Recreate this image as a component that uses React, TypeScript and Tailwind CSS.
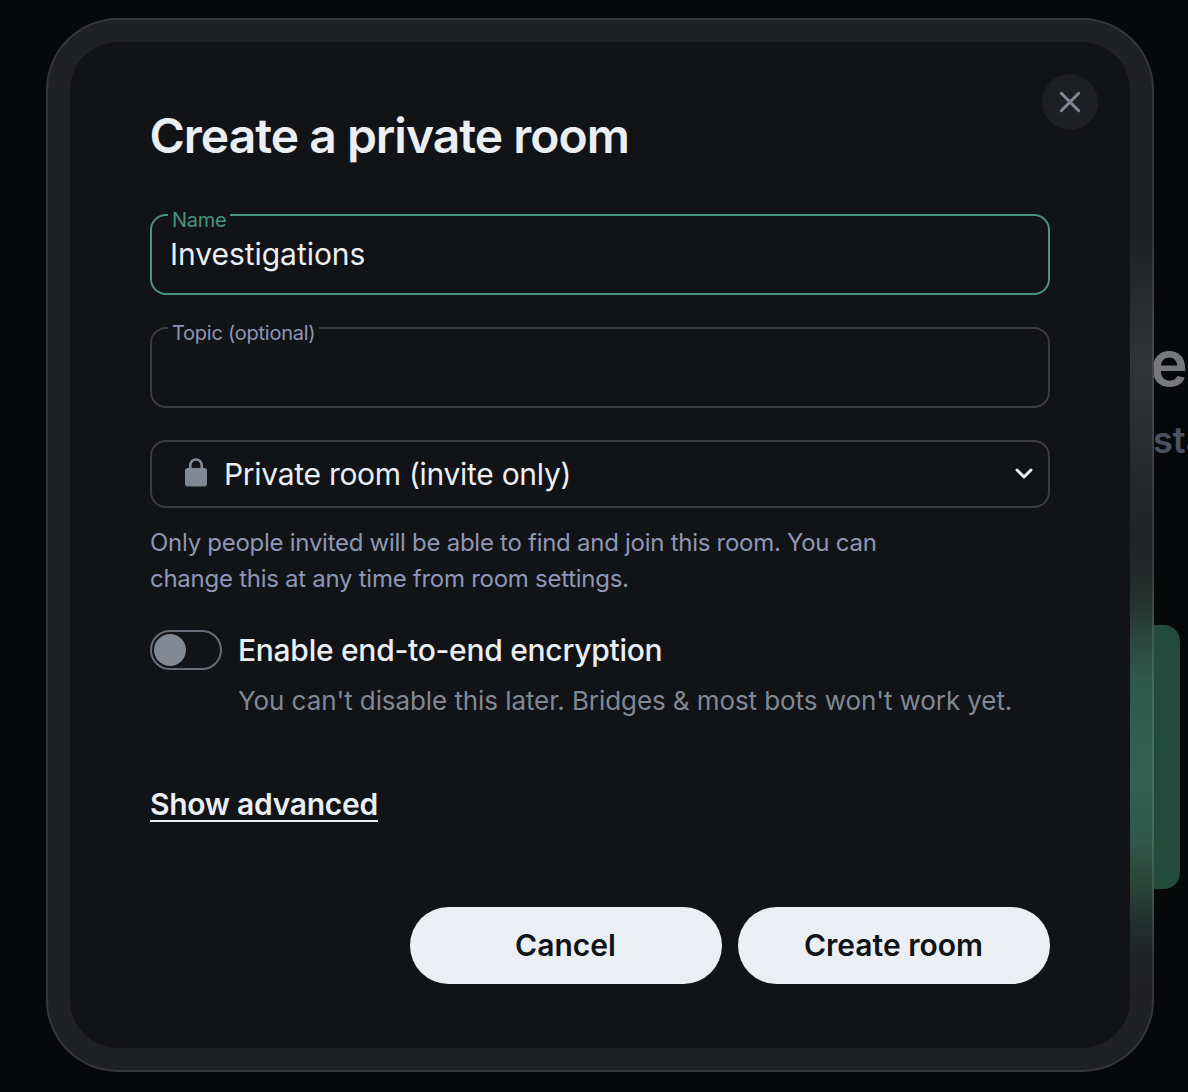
import type { ReactNode } from "react";

function Field({ label, value, active }: { label: string; value: string; active?: boolean }) {
  return (
    <div
      className={`relative h-[81px] rounded-[16px] border-2 ${
        active ? "border-[#46967a]" : "border-[#3c3d41]"
      }`}
    >
      <label
        className={`absolute left-[16px] -top-[8px] bg-[#121317] px-[4px] text-[20px] leading-[24px] tracking-[-0.25px] whitespace-nowrap ${
          active ? "text-[#46967a]" : "text-[#8d97b5]"
        }`}
      >
        {label}
      </label>
      <input
        defaultValue={value}
        aria-label={label}
        className="h-[76px] w-full bg-transparent px-[18px] pb-px text-[30px] tracking-[-0.04px] text-[#ebeef2] outline-none"
      />
    </div>
  );
}

function PillButton({ children }: { children: ReactNode }) {
  return (
    <button className="h-[77px] w-[312px] rounded-full bg-[#ebeef2] pr-px text-[30px] font-semibold text-[#101317]">
      {children}
    </button>
  );
}

function LockIcon() {
  return (
    <svg width="24" height="30" viewBox="0 0 24 30" className="mb-[3px] shrink-0">
      <path d="M6.3 12V7.2a5.7 5.7 0 0 1 11.4 0V12" fill="none" stroke="#808893" strokeWidth="2.6" />
      <rect x="1" y="10" width="22" height="18.4" rx="2.7" fill="#808893" />
    </svg>
  );
}

// Parts of the home page that stick out past the dialog
function HomePage() {
  return (
    <div className="absolute inset-0 overflow-hidden" aria-hidden="true">
      <div className="absolute left-[1150px] top-[323px] text-[64px] leading-[80px] font-semibold text-[#77787a]">e</div>
      <div className="absolute left-[1153px] top-[418px] text-[36px] leading-[44px] font-semibold text-[#4d5263]">sta</div>
      <div className="absolute left-[1100px] top-[625px] h-[264px] w-[80px] rounded-[16px] bg-[#224b3c]" />
    </div>
  );
}

export default function App() {
  return (
    <div className="relative h-[1092px] w-[1188px] overflow-hidden bg-[#060809] pt-[18px] pl-[46px] font-['Inter',sans-serif]">
      <HomePage />

      <div className="relative h-[1054px] w-[1108px] rounded-[72px] border-2 border-white/10 bg-[#202124] bg-[linear-gradient(180deg,#202124_0px,#202124_220px,#28292b_275px,#323336_345px,#303134_375px,#27282b_455px,#222325_520px,#222727_550px,#25352f_590px,#2a473d_620px,#2f574a_660px,#335f51_720px,#345f51_770px,#305749_825px,#294338_870px,#21302d_905px,#202427_935px,#212123_970px,#202124_1000px)] bg-[length:24px_100%] bg-right bg-no-repeat bg-origin-border p-[22px]">
        <div className="relative h-full rounded-[48px] bg-[#121317] px-[80px] pt-[64px]">
          <button
            aria-label="Close"
            className="absolute right-[32px] top-[32px] flex size-[56px] items-center justify-center rounded-full bg-[#1e1f23]"
          >
            <svg width="22" height="22" viewBox="0 0 22 22">
              <path d="M2.3 2.3l17.4 17.4M19.7 2.3L2.3 19.7" stroke="#808893" strokeWidth="3" strokeLinecap="round" />
            </svg>
          </button>

          <h1 className="-ml-[0.5px] h-[60px] text-[48px] leading-[60px] font-semibold tracking-[-1px] text-[#ebeef2]">
            Create a private room
          </h1>

          <div className="mt-[48px] flex flex-col gap-[32px]">
            <Field label="Name" value="Investigations" active />
            <Field label="Topic (optional)" value="" />
            <div className="flex h-[68px] items-center rounded-[16px] border-2 border-[#3c3d41] pr-[14px] pl-[32px]">
              <LockIcon />
              <span className="ml-[16px] flex-1 text-[30px] tracking-[-0.29px] text-[#ebeef2]">Private room (invite only)</span>
              <svg width="20" height="14" viewBox="0 0 20 14">
                <path d="M3 3l7 7 7-7" fill="none" stroke="#ebeef2" strokeWidth="3" strokeLinecap="round" strokeLinejoin="round" />
              </svg>
            </div>
          </div>

          <p className="mt-[17px] w-[765px] text-[24px] leading-[36px] tracking-[-0.27px] text-[#8d97b5]">
            Only people invited will be able to find and join this room. You can
            <br />
            change this at any time from room settings.
          </p>

          <div className="mt-[33px] flex items-center gap-[16px]">
            <div className="flex h-[40px] w-[72px] items-center rounded-full border-2 border-[#656c76] pl-[2px]">
              <div className="size-[32px] rounded-full bg-[#808893]" />
            </div>
            <span className="text-[30px] leading-[40px] font-medium tracking-[-0.27px] text-[#ebeef2]">Enable end-to-end encryption</span>
          </div>
          <p className="mt-[11px] ml-[88px] text-[26px] leading-[40px] tracking-[-0.08px] whitespace-nowrap text-[#808893]">
            You can't disable this later. Bridges &amp; most bots won't work yet.
          </p>

          <div className="mt-[66px] flex">
            <button className="h-[35px] border-b-2 border-[#ebeef2] text-[30px] leading-[34px] font-semibold tracking-[-0.28px] text-[#ebeef2]">
              Show advanced
            </button>
          </div>

          <div className="mt-[85px] flex justify-end gap-[16px]">
            <PillButton>Cancel</PillButton>
            <PillButton>Create room</PillButton>
          </div>
        </div>
      </div>
    </div>
  );
}
